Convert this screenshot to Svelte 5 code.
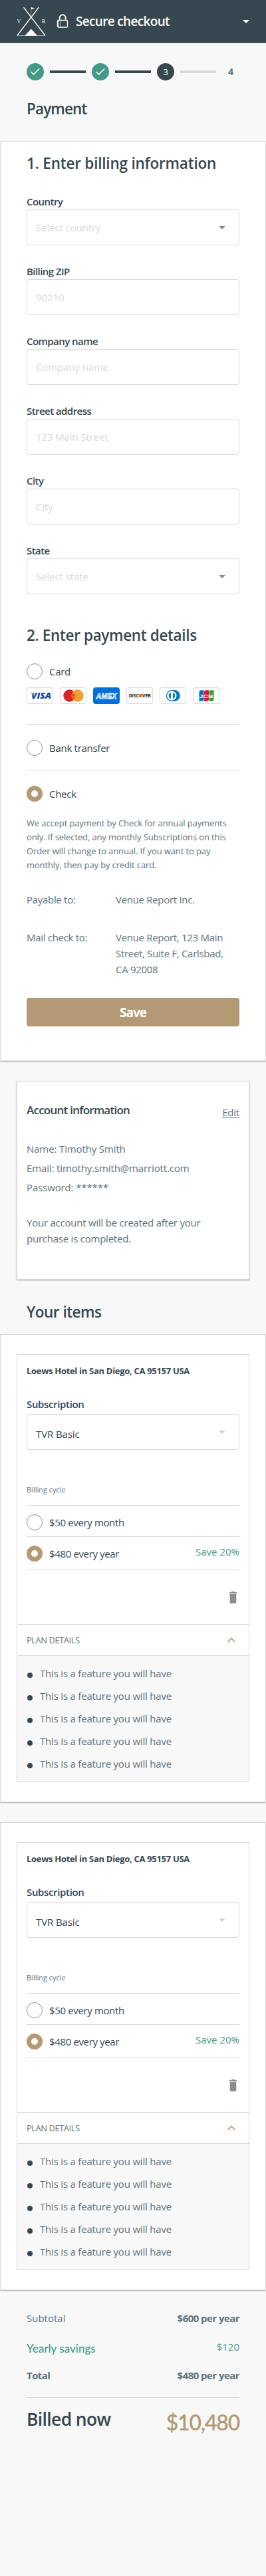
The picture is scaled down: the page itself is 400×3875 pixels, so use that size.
<script lang="ts">
	interface Field {
		label: string;
		placeholder: string;
		select?: boolean;
	}

	const fields: Field[] = [
		{ label: 'Country', placeholder: 'Select country', select: true },
		{ label: 'Billing ZIP', placeholder: '90210' },
		{ label: 'Company name', placeholder: 'Company name' },
		{ label: 'Street address', placeholder: '123 Main Street' },
		{ label: 'City', placeholder: 'City' },
		{ label: 'State', placeholder: 'Select state', select: true }
	];

	const steps = [1, 2, 3, 4];
	const current = 3;

	const feature = 'This is a feature you will have';
	let items = $state([
		{ id: 1, name: 'Loews Hotel in San Diego, CA 95157 USA', plan: 'TVR Basic', cycle: 'year', open: true },
		{ id: 2, name: 'Loews Hotel in San Diego, CA 95157 USA', plan: 'TVR Basic', cycle: 'year', open: true }
	]);

	let method = $state('check');

	function removeItem(id: number) {
		items = items.filter((item) => item.id !== id);
	}
</script>

{#snippet caret()}
	<svg class="caret" width="10" height="5" viewBox="0 0 10 5"><path d="M0 0h10L5 5z" fill="currentColor" /></svg>
{/snippet}

<div class="page">
	<header>
		<svg class="logo" width="44" height="44" viewBox="0 0 44 44" fill="none" stroke="#fff">
			<path d="M10.500 1L43 43.500M33.300 1L.800 43.500" stroke-width="1.300" />
			<path d="M21.700 1v15" stroke-width=".5" opacity=".7" />
			<path d="M22 1l5 1.300-5 1.900z" fill="#fff" stroke="none" />
			<path d="M1 43.500h42" stroke-width=".6" opacity=".8" />
			<path d="M12.300 43.800l9.500-10.200 9.400 10.200z" fill="#fff" stroke="none" />
			<text x=".5" y="24.500" class="logo-letter">V</text>
			<text x="38" y="24.500" class="logo-letter">R</text>
		</svg>
		<svg class="lock" width="18" height="21" viewBox="0 0 18 21" fill="none" stroke="#fff">
			<path d="M4.700 8.800V6a4.500 4.700 0 0 1 9 0v2.800" stroke-width="1.900" />
			<rect x="1.500" y="9.500" width="15" height="10.500" rx="1.500" stroke-width="1.300" />
			<path d="M2.200 9.500v10.500" stroke-width="1.500" />
			<path d="M5.600 11.500v7" stroke-width="1" stroke-dasharray="1.500 1.300" />
		</svg>
		<span class="title">Secure checkout</span>
		{@render caret()}
	</header>

	<ol class="steps">
		{#each steps as step}
			{#if step > 1}
				<li class="bar" class:todo={step > current}></li>
			{/if}
			<li class="step" class:done={step < current} class:current={step === current}>
				{#if step < current}
					<svg width="16" height="12" viewBox="0 0 16 12" fill="none"><path d="M1.500 5.800L5.500 9.900L14.300 1.300" stroke="#fff" stroke-width="1.500" /></svg>
				{:else}
					{step}
				{/if}
			</li>
		{/each}
	</ol>

	<h1 class="payment">Payment</h1>

	<section class="panel form">
		<h2 class="billing">1. Enter billing information</h2>
		<div class="fields">
			{#each fields as field}
				<label class="field">
					<span>{field.label}</span>
					<div class="control">
						{#if field.select}
							<select><option>{field.placeholder}</option></select>
							{@render caret()}
						{:else}
							<input type="text" placeholder={field.placeholder} />
						{/if}
					</div>
				</label>
			{/each}
		</div>

		<h2 class="details">2. Enter payment details</h2>
		<label class="radio">
			<input type="radio" value="card" bind:group={method} />
			<span>Card</span>
		</label>
		<div class="cards">
			<svg class="card" viewBox="0 0 40 25">
				<text x="7" y="16.900" class="visa" textLength="30" lengthAdjust="spacingAndGlyphs">VISA</text>
				<path d="M4.800 7.800h4.200l1.800 6C9.600 10.600 7.800 8.900 4.800 8.200z" fill="#f7a823" />
			</svg>
			<svg class="card" viewBox="0 0 40 25">
				<circle cx="14.500" cy="12.500" r="9.200" fill="#d9222a" />
				<circle cx="26.500" cy="12.500" r="9.200" fill="#ee9f2d" />
				<path d="M18 10.200h5M17.500 12.200h5.500M17.500 14.200h5.500M18.500 16.200h4" stroke="#d9222a" stroke-width="1" />
			</svg>
			<svg class="card amex" viewBox="0 0 40 25">
				<text x="4.500" y="16.600" class="amex-name" textLength="31" lengthAdjust="spacingAndGlyphs">AMEX</text>
			</svg>
			<svg class="card" viewBox="0 0 40 25">
				<text x="3.700" y="15.200" class="discover" textLength="15" lengthAdjust="spacingAndGlyphs">DISC</text>
				<circle cx="21.500" cy="12.500" r="2.800" fill="#f47216" />
				<text x="24" y="15.200" class="discover" textLength="12.700" lengthAdjust="spacingAndGlyphs">VER</text>
			</svg>
			<svg class="card" viewBox="0 0 40 25">
				<path d="M18.300 4h4a8.500 8.500 0 0 1 0 17h-4z" fill="#0079be" />
				<circle cx="18.300" cy="12.500" r="7.800" fill="#fff" stroke="#0079be" stroke-width="1.200" />
				<path d="M16.900 7.800a5 5 0 0 0 0 9.400zM19.900 7.800a5 5 0 0 1 0 9.400z" fill="#0079be" />
			</svg>
			<svg class="card" viewBox="0 0 40 25">
				<path d="M12.500 4.300h4v13.400a3 3 0 0 1-3 3h-4V7.300a3 3 0 0 1 3-3z" fill="#0f6cb6" />
				<path d="M20 4.300h4v13.400a3 3 0 0 1-3 3h-4V7.300a3 3 0 0 1 3-3z" fill="#e6123c" />
				<path d="M27.500 4.300h4v13.400a3 3 0 0 1-3 3h-4V7.300a3 3 0 0 1 3-3z" fill="#2fa43a" />
				<text x="9.500" y="15.500" class="jcb" textLength="21" lengthAdjust="spacingAndGlyphs">JCB</text>
			</svg>
		</div>
		<hr class="after-cards" />
		<label class="radio">
			<input type="radio" value="bank" bind:group={method} />
			<span>Bank transfer</span>
		</label>
		<hr class="after-bank" />
		<label class="radio">
			<input type="radio" value="check" bind:group={method} />
			<span>Check</span>
		</label>
		<p class="note">
			We accept payment by Check for annual payments<br />only. If selected, any monthly Subscriptions on this<br />Order
			will change to annual. If you want to pay<br />monthly, then pay by credit card.
		</p>
		<dl>
			<dt>Payable to:</dt>
			<dd>Venue Report Inc.</dd>
			<dt>Mail check to:</dt>
			<dd>Venue Report, 123 Main<br />Street, Suite F, Carlsbad,<br />CA 92008</dd>
		</dl>
		<button class="save">Save</button>
	</section>

	<section class="account">
		<div class="account-head">
			<h3>Account information</h3>
			<a href="#edit">Edit</a>
		</div>
		<ul>
			<li>Name: Timothy Smith</li>
			<li>Email: timothy.smith@marriott.com</li>
			<li>Password: ******</li>
		</ul>
		<p>Your account will be created after your<br />purchase is completed.</p>
	</section>

	<h1 class="your-items">Your items</h1>

	{#each items as item (item.id)}
		<section class="panel item">
			<div class="box">
				<div class="plan">
					<h4>{item.name}</h4>
					<label class="field">
						<span>Subscription</span>
						<div class="control">
							<select><option>{item.plan}</option></select>
							{@render caret()}
						</div>
					</label>
					<div class="cycle">Billing cycle</div>
					<div class="option">
						<label class="radio">
							<input type="radio" value="month" bind:group={item.cycle} />
							<span>$50 every month</span>
						</label>
					</div>
					<div class="option yearly">
						<label class="radio">
							<input type="radio" value="year" bind:group={item.cycle} />
							<span>$480 every year</span>
						</label>
						<span class="saving">Save 20%</span>
					</div>
					<div class="tools">
						<button class="remove" aria-label="Remove" onclick={() => removeItem(item.id)}>
							<svg width="11" height="18" viewBox="0 0 11 18" fill="#8c8c8c">
								<path d="M0 1h3l.600-1h3.800L8 1h3v1.900H0zM.700 4h9.600v12.300q0 1.700-1.700 1.700H2.400Q.700 18 .700 16.300z" />
							</svg>
						</button>
					</div>
				</div>
				<button class="toggle" onclick={() => (item.open = !item.open)}>
					<span>PLAN DETAILS</span>
					<svg width="12" height="8" viewBox="0 0 12 8" fill="none"><path d="M.800 6.900L6 1.500L11.200 6.900" stroke="#b59a73" stroke-width="1.700" /></svg>
				</button>
				{#if item.open}
					<ul class="features">
						{#each { length: 5 } as _}
							<li>{feature}</li>
						{/each}
					</ul>
				{/if}
			</div>
		</section>
	{/each}

	<section class="totals">
		<div class="row"><span>Subtotal</span><b>$600 per year</b></div>
		<div class="row savings"><span>Yearly savings</span><span class="amount">$120</span></div>
		<div class="row"><b>Total</b><b>$480 per year</b></div>
		<div class="billed">
			<span class="now">Billed now</span>
			<span class="due">$10,480</span>
		</div>
	</section>
</div>

<style>
	:global(body) {
		background: #f8f8f8;
	}

	.page {
		--dark: #37474f;
		--grey: #5f727c;
		--line: #d9d9d9;
		--gold: #b39a74;
		--green: #449987;
		min-height: 3875px;
		background: #f8f8f8;
		color: var(--grey);
		font-family: 'Open Sans', 'Noto Sans', sans-serif;
		font-size: 15px;
		font-weight: 500;
		line-height: 24px;
		letter-spacing: -0.2px;
	}

	.page * {
		box-sizing: border-box;
	}

	h1,
	h2,
	h3,
	h4,
	p,
	ul,
	ol,
	dl,
	dd {
		margin: 0;
		padding: 0;
		list-style: none;
	}

	input,
	select,
	button {
		font: inherit;
		color: inherit;
		letter-spacing: inherit;
		margin: 0;
	}

	button {
		border: 0;
		padding: 0;
		background: none;
	}

	header {
		display: flex;
		align-items: center;
		height: 65px;
		padding: 0 25px;
		background: var(--dark);
		border-bottom: 1px solid #546e7a;
		color: #fff;

		.title {
			flex: 1;
			margin-left: 11px;
			font-size: 19px;
			font-weight: 600;
			letter-spacing: -0.67px;
		}

		.lock {
			margin-left: 16px;
			margin-bottom: 2px;
		}
	}

	.logo-letter {
		font: 8px 'Liberation Serif', serif;
		fill: #fff;
		stroke: none;
	}

	.steps {
		display: flex;
		align-items: center;
		gap: 9px;
		padding: 30px 40px 0;
	}

	.step {
		display: flex;
		align-items: center;
		justify-content: center;
		width: 26px;
		height: 26px;
		border-radius: 50%;
		font-size: 14px;
		font-weight: 700;
	}

	.done {
		background: var(--green);
	}

	.current {
		background: var(--dark);
		color: #fff;
		font-size: 13px;
		font-weight: 500;
	}

	.bar {
		width: 54px;
		height: 4px;
		background: var(--dark);
	}

	.todo {
		background: var(--line);
	}

	h1,
	h2 {
		padding: 1px 0 0 40px;
		font-size: 22.5px;
		font-weight: 600;
		line-height: 31px;
		color: var(--dark);
	}

	.payment {
		margin: 26px 0 33px;
		letter-spacing: -0.85px;
	}

	.panel {
		background: #fff;
		border: 1px solid var(--line);
		box-shadow: 0 1px 2px rgba(0, 0, 0, 0.3);
	}

	.form {
		padding: 16px 39px 51px;

		h2 {
			padding-left: 0;
		}

		.details {
			margin: 45px 0 27px;
			letter-spacing: -0.35px;
		}
	}

	.fields {
		display: grid;
		gap: 29px;
		margin-top: 32px;
	}

	.field {
		display: flex;
		flex-direction: column;
		gap: 2px;
		line-height: 20px;

		> span {
			font-weight: 600;
			letter-spacing: -0.55px;
			color: var(--dark);
		}
	}

	.control {
		display: flex;
		align-items: center;
		height: 54px;
		padding: 0 20px 0 13px;
		border: 1px solid var(--line);
		border-radius: 4px;
		letter-spacing: -0.1px;
		color: #888;

		input,
		select {
			flex: 1;
			min-width: 0;
			height: 52px;
			padding: 0;
			border: 0;
			outline: 0;
			appearance: none;
			background: none;
			color: #d9d9d9;
		}

		input::placeholder {
			color: #d9d9d9;
		}
	}

	.radio {
		display: flex;
		align-items: center;
		gap: 10px;
		height: 24px;
		letter-spacing: -0.28px;
		color: var(--dark);

		input {
			appearance: none;
			width: 24px;
			height: 24px;
			border: 1px solid #8c8c8c;
			border-radius: 50%;
			background: #fff;
		}

		input:checked {
			border: 7px solid var(--gold);
		}
	}

	.cards {
		display: flex;
		gap: 10px;
		margin-top: 12px;
		letter-spacing: 0;
	}

	.card {
		width: 40px;
		height: 25px;
		border-radius: 4px;
		box-shadow: inset 0 0 0 1px var(--line);
	}

	.amex {
		background: #006fdb;
		box-shadow: none;
	}

	.visa {
		font: italic 800 12.5px 'Open Sans', sans-serif;
		fill: #0e4595;
	}

	.amex-name {
		font: italic 700 11px 'Liberation Sans', sans-serif;
		fill: #006fdb;
		stroke: #fff;
		stroke-width: 0.8px;
	}

	.discover {
		font: 700 7px 'Open Sans', sans-serif;
		fill: #111;
	}

	.jcb {
		font: 700 8px 'Liberation Sans', sans-serif;
		fill: #fff;
	}

	hr {
		border: 0;
		height: 1px;
		background: var(--line);
	}

	.after-cards {
		margin: 30px 0 23px;
	}

	.after-bank {
		margin: 21px 0 23px;
	}

	.note {
		margin-top: 22px;
		font-size: 13px;
		line-height: 21px;
		letter-spacing: -0.12px;
		white-space: nowrap;
	}

	dl {
		display: grid;
		grid-template-columns: 134px 1fr;
		row-gap: 33px;
		margin: 29px 0 31px;
		letter-spacing: -0.3px;
		white-space: nowrap;
	}

	.save {
		display: block;
		width: 100%;
		height: 43px;
		border-radius: 4px;
		background: var(--gold);
		color: #fff;
		font-size: 19px;
		font-weight: 700;
		letter-spacing: -1px;
	}

	.account {
		height: 299px;
		margin: 30px 25px 0;
		padding: 31px 14px 0;
		background: #fff;
		border: 1px solid var(--line);
		box-shadow: 0 1px 2px rgba(0, 0, 0, 0.3);

		ul {
			margin: 29px 0 26px;
			line-height: 29px;
			letter-spacing: -0.13px;
		}

		p {
			letter-spacing: -0.23px;
			white-space: nowrap;
		}
	}

	.account-head {
		display: flex;
		justify-content: space-between;

		h3 {
			font-size: 17px;
			font-weight: 600;
			letter-spacing: -0.75px;
			color: var(--dark);
		}

		a {
			margin-top: 3px;
			color: inherit;
			text-underline-offset: 2px;
		}
	}

	.your-items {
		margin: 32px 0 18px;
		letter-spacing: -0.5px;
	}

	.item {
		padding: 29px 24px 30px;

		+ .item {
			margin-top: 30px;
		}
	}

	.box {
		border: 1px solid var(--line);
	}

	.plan {
		padding: 14px 14px 0;

		h4 {
			font-size: 13px;
			font-weight: 700;
			line-height: 20px;
			letter-spacing: -0.3px;
			color: var(--dark);
			white-space: nowrap;
		}

		.field {
			gap: 5px;
			margin: 30px 0 52px;

			> span {
				letter-spacing: -0.35px;
			}
		}

		.control {
			color: #cfcfcf;

			select {
				padding-top: 5px;
				color: var(--dark);
			}
		}

		.radio {
			letter-spacing: -0.36px;
		}
	}

	.cycle {
		margin-bottom: 15px;
		font-size: 11px;
		line-height: 16px;
		letter-spacing: 0;
	}

	.option {
		display: flex;
		justify-content: space-between;
		height: 47px;
		padding-top: 13px;
		border-top: 1px solid var(--line);
	}

	.yearly {
		height: 50px;
		border-bottom: 1px solid var(--line);
	}

	.saving {
		margin-top: -3px;
		letter-spacing: 0;
		color: var(--green);
	}

	.tools {
		display: flex;
		justify-content: flex-end;
		height: 82px;
		padding: 33px 4px 0 0;
	}

	.remove {
		display: flex;
		height: 18px;
	}

	.toggle {
		display: flex;
		align-items: center;
		justify-content: space-between;
		width: 100%;
		height: 48px;
		padding: 0 20px 0 14px;
		border: solid var(--line);
		border-width: 1px 0;
		font-size: 13px;
		letter-spacing: -0.5px;
	}

	.features {
		padding: 9px 14px;
		background: #f8f8f8;
		line-height: 34px;

		li {
			display: flex;
			align-items: center;
			gap: 11px;
		}

		li::before {
			content: '';
			width: 8px;
			height: 8px;
			margin: 6px 0 0 1px;
			border-radius: 50%;
			background: var(--dark);
		}
	}

	.totals {
		padding: 30px 40px 0;
		letter-spacing: 0;

		b {
			letter-spacing: -0.55px;
		}
	}

	.row {
		display: flex;
		justify-content: space-between;
		height: 24px;
	}

	.savings {
		margin: 19px 0;
		color: var(--green);
		font-family: Lato, sans-serif;
		font-size: 17px;

		span:first-child {
			margin-top: 3px;
		}

		.amount {
			font-family: 'Open Sans', sans-serif;
			font-size: 15px;
		}
	}

	.billed {
		display: flex;
		justify-content: space-between;
		margin-top: 21px;
		padding-top: 14px;
		border-top: 1px solid var(--line);

		.now {
			font-size: 26.5px;
			font-weight: 600;
			line-height: 36px;
			letter-spacing: -0.65px;
			color: var(--dark);
		}

		.due {
			margin-top: 3px;
			font-family: Lato, sans-serif;
			font-size: 32px;
			font-weight: 600;
			line-height: 40px;
			letter-spacing: -1.2px;
			color: var(--gold);
		}
	}
</style>
